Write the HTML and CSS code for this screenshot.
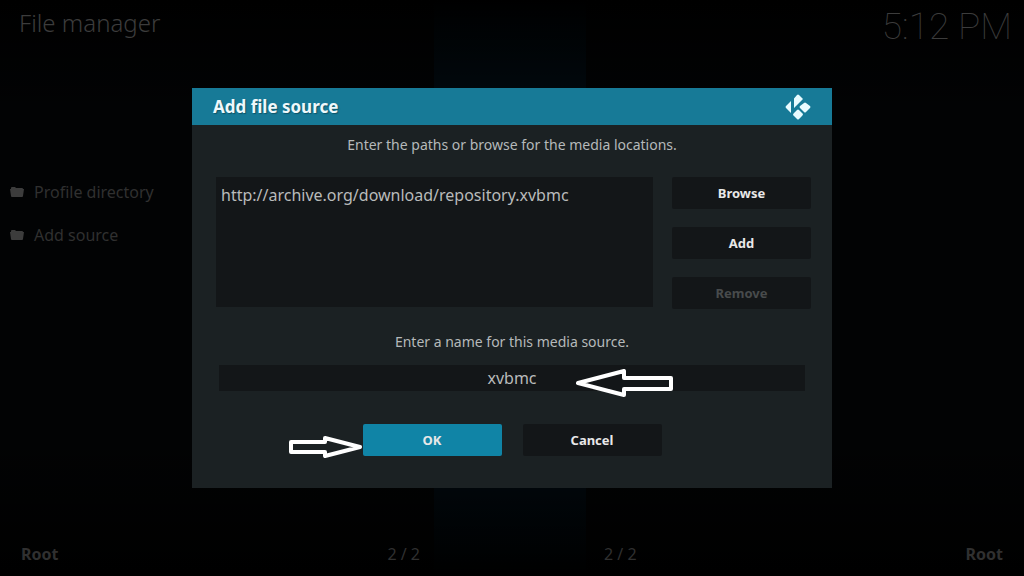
FILE: index.html
```html
<!DOCTYPE html>
<html lang="en">
<head>
    <meta charset="utf-8">
    <title>File manager</title>
    <link rel="stylesheet" href="styles.css">
</head>
<body>
    <div class="screen">
        <header class="topbar">
            <h1 class="title">File manager</h1>
            <div class="clock">5:12 PM</div>
        </header>

        <main class="files">
            <a class="file" href="#">
                <svg class="folder" viewBox="0 0 14 12"><path d="M1 3V2Q1 1 2 1H5L6 2H12Q13 2 13 3H14L13 10Q13 11 12 11H2Q1 11 1 10L0 3Z"/></svg>
                Profile directory
            </a>
            <a class="file" href="#">
                <svg class="folder" viewBox="0 0 14 12"><path d="M1 3V2Q1 1 2 1H5L6 2H12Q13 2 13 3H14L13 10Q13 11 12 11H2Q1 11 1 10L0 3Z"/></svg>
                Add source
            </a>
        </main>

        <footer class="bottombar">
            <div class="status"><b>Root</b><span>2 / 2</span></div>
            <div class="status"><span>2 / 2</span><b>Root</b></div>
        </footer>
    </div>

    <div class="overlay">
        <form class="dialog" role="dialog" aria-labelledby="dialog-title">
            <div class="dialog-header">
                <h2 class="dialog-title" id="dialog-title">Add file source</h2>
                <svg class="logo" viewBox="0 0 26 26">
                    <path d="M9 4.500L12 1Q13 0 14 1L18 5L9 14ZM19 9Q20 8 21 9L25 12Q26 13 25 14L21 18Q20 19 19 18L15 14Q14 13 15 12ZM12 16Q13 15 14 16L18 20Q18 21 17 22L14 25Q13 26 12 25L8 21Q8 20 9 19ZM6 7V19L1 14Q0 13 1 12Z"/>
                </svg>
            </div>
            <div class="dialog-body">
                <label class="hint" for="paths">Enter the paths or browse for the media locations.</label>
                <div class="sources">
                    <textarea class="paths" id="paths" spellcheck="false">http://archive.org/download/repository.xvbmc</textarea>
                    <div class="side">
                        <button type="button" class="btn">Browse</button>
                        <button type="button" class="btn">Add</button>
                        <button type="button" class="btn" disabled>Remove</button>
                    </div>
                </div>
                <label class="hint" for="name">Enter a name for this media source.</label>
                <div class="name-row">
                    <input class="name" id="name" type="text" value="xvbmc" spellcheck="false">
                    <svg class="arrow arrow-name" viewBox="0 0 98 28"><path d="M2 14L48 2V9H95V20H48V26Z"/></svg>
                </div>
                <div class="actions">
                    <button type="button" class="btn primary">OK</button>
                    <button type="button" class="btn">Cancel</button>
                    <svg class="arrow arrow-ok" viewBox="0 0 74 22"><path d="M2 6H36V2L71 11L36 20V16H2Z"/></svg>
                </div>
            </div>
        </form>
    </div>
</body>
</html>
```
FILE: styles.css
```css
* {
    box-sizing: border-box;
}
body {
    margin: 0;
    font-family: "Noto Sans", sans-serif;
    font-size: 16px;
    color: #303030;
    background-color: #000;
}
.screen {
    min-height: 100vh;
    display: flex;
    flex-direction: column;
    background: linear-gradient(#000, transparent 20%, transparent 75%, #000),
        linear-gradient(90deg, #020304 434px, #010a10 434px, #010a10 586px, #020304 586px);
}
.topbar {
    display: flex;
    justify-content: space-between;
    padding: 2px 12px 0 19px;
    height: 170px;
}
.title {
    margin: 4px 0 0;
    font-size: 24px;
    line-height: 34px;
    font-weight: 300;
    color: #3c3c3c;
}
.clock {
    font-family: Roboto, sans-serif;
    font-size: 37px;
    line-height: 50px;
    font-weight: 100;
    color: #3c3c3c;
}
.files {
    flex: 1;
}
.file {
    display: flex;
    align-items: center;
    gap: 10px;
    height: 43px;
    padding-left: 10px;
    color: inherit;
    text-decoration: none;
}
.folder {
    width: 14px;
    height: 12px;
    fill: #3c3c3c;
}
.bottombar {
    display: grid;
    grid-template-columns: 1fr 1fr;
    gap: 184px;
    padding: 0 21px;
    height: 43px;
    line-height: 43px;
}
.status {
    display: flex;
    justify-content: space-between;
}
.overlay {
    position: fixed;
    inset: 0;
    display: flex;
    justify-content: center;
    align-items: center;
}
.dialog {
    width: 62.5%;
    background-color: #1b2123;
}
.dialog-header {
    display: flex;
    justify-content: space-between;
    align-items: center;
    height: 37px;
    padding: 0 21px;
    background-color: #177a97;
}
.dialog-title {
    margin: 0;
    font-size: 17px;
    font-weight: 700;
    color: #eef8fb;
    text-shadow: 1px 1px 1px #0e5468;
}
.logo {
    width: 26px;
    height: 26px;
    fill: #e8fbff;
}
.dialog-body {
    padding: 10px 21px 32px;
}
.hint {
    display: block;
    font-size: 14px;
    line-height: 20px;
    text-align: center;
    color: #b5b9ba;
}
.sources {
    display: flex;
    gap: 19px;
    margin: 22px 0 23px;
    padding-left: 3px;
}
.paths {
    flex: 1;
    height: 130px;
    padding: 7px 5px;
    border: 0;
    resize: none;
    font: inherit;
    line-height: 22px;
    color: #b9bbbb;
    background-color: #131618;
}
.side {
    display: flex;
    flex-direction: column;
    gap: 18px;
}
.btn {
    width: 139px;
    height: 32px;
    padding: 0;
    border: 0;
    border-radius: 2px;
    font: inherit;
    font-size: 13px;
    font-weight: 700;
    color: #e8e8e8;
    background-color: #131618;
}
.btn:disabled {
    color: #484b4c;
}
.primary {
    background-color: #1084a6;
}
.name-row {
    position: relative;
    margin: 13px 6px 33px;
}
.name {
    display: block;
    width: 100%;
    height: 26px;
    padding: 0;
    border: 0;
    font: inherit;
    text-align: center;
    color: #b9bbbb;
    background-color: #131618;
}
.actions {
    position: relative;
    display: flex;
    justify-content: center;
    gap: 21px;
}
.arrow {
    position: absolute;
    fill: none;
    stroke: #fff;
    stroke-width: 4;
    stroke-linejoin: round;
}
.arrow-name {
    width: 98px;
    height: 28px;
    left: 357px;
    top: 4px;
}
.arrow-ok {
    width: 74px;
    height: 22px;
    left: 76px;
    top: 12px;
}
```
